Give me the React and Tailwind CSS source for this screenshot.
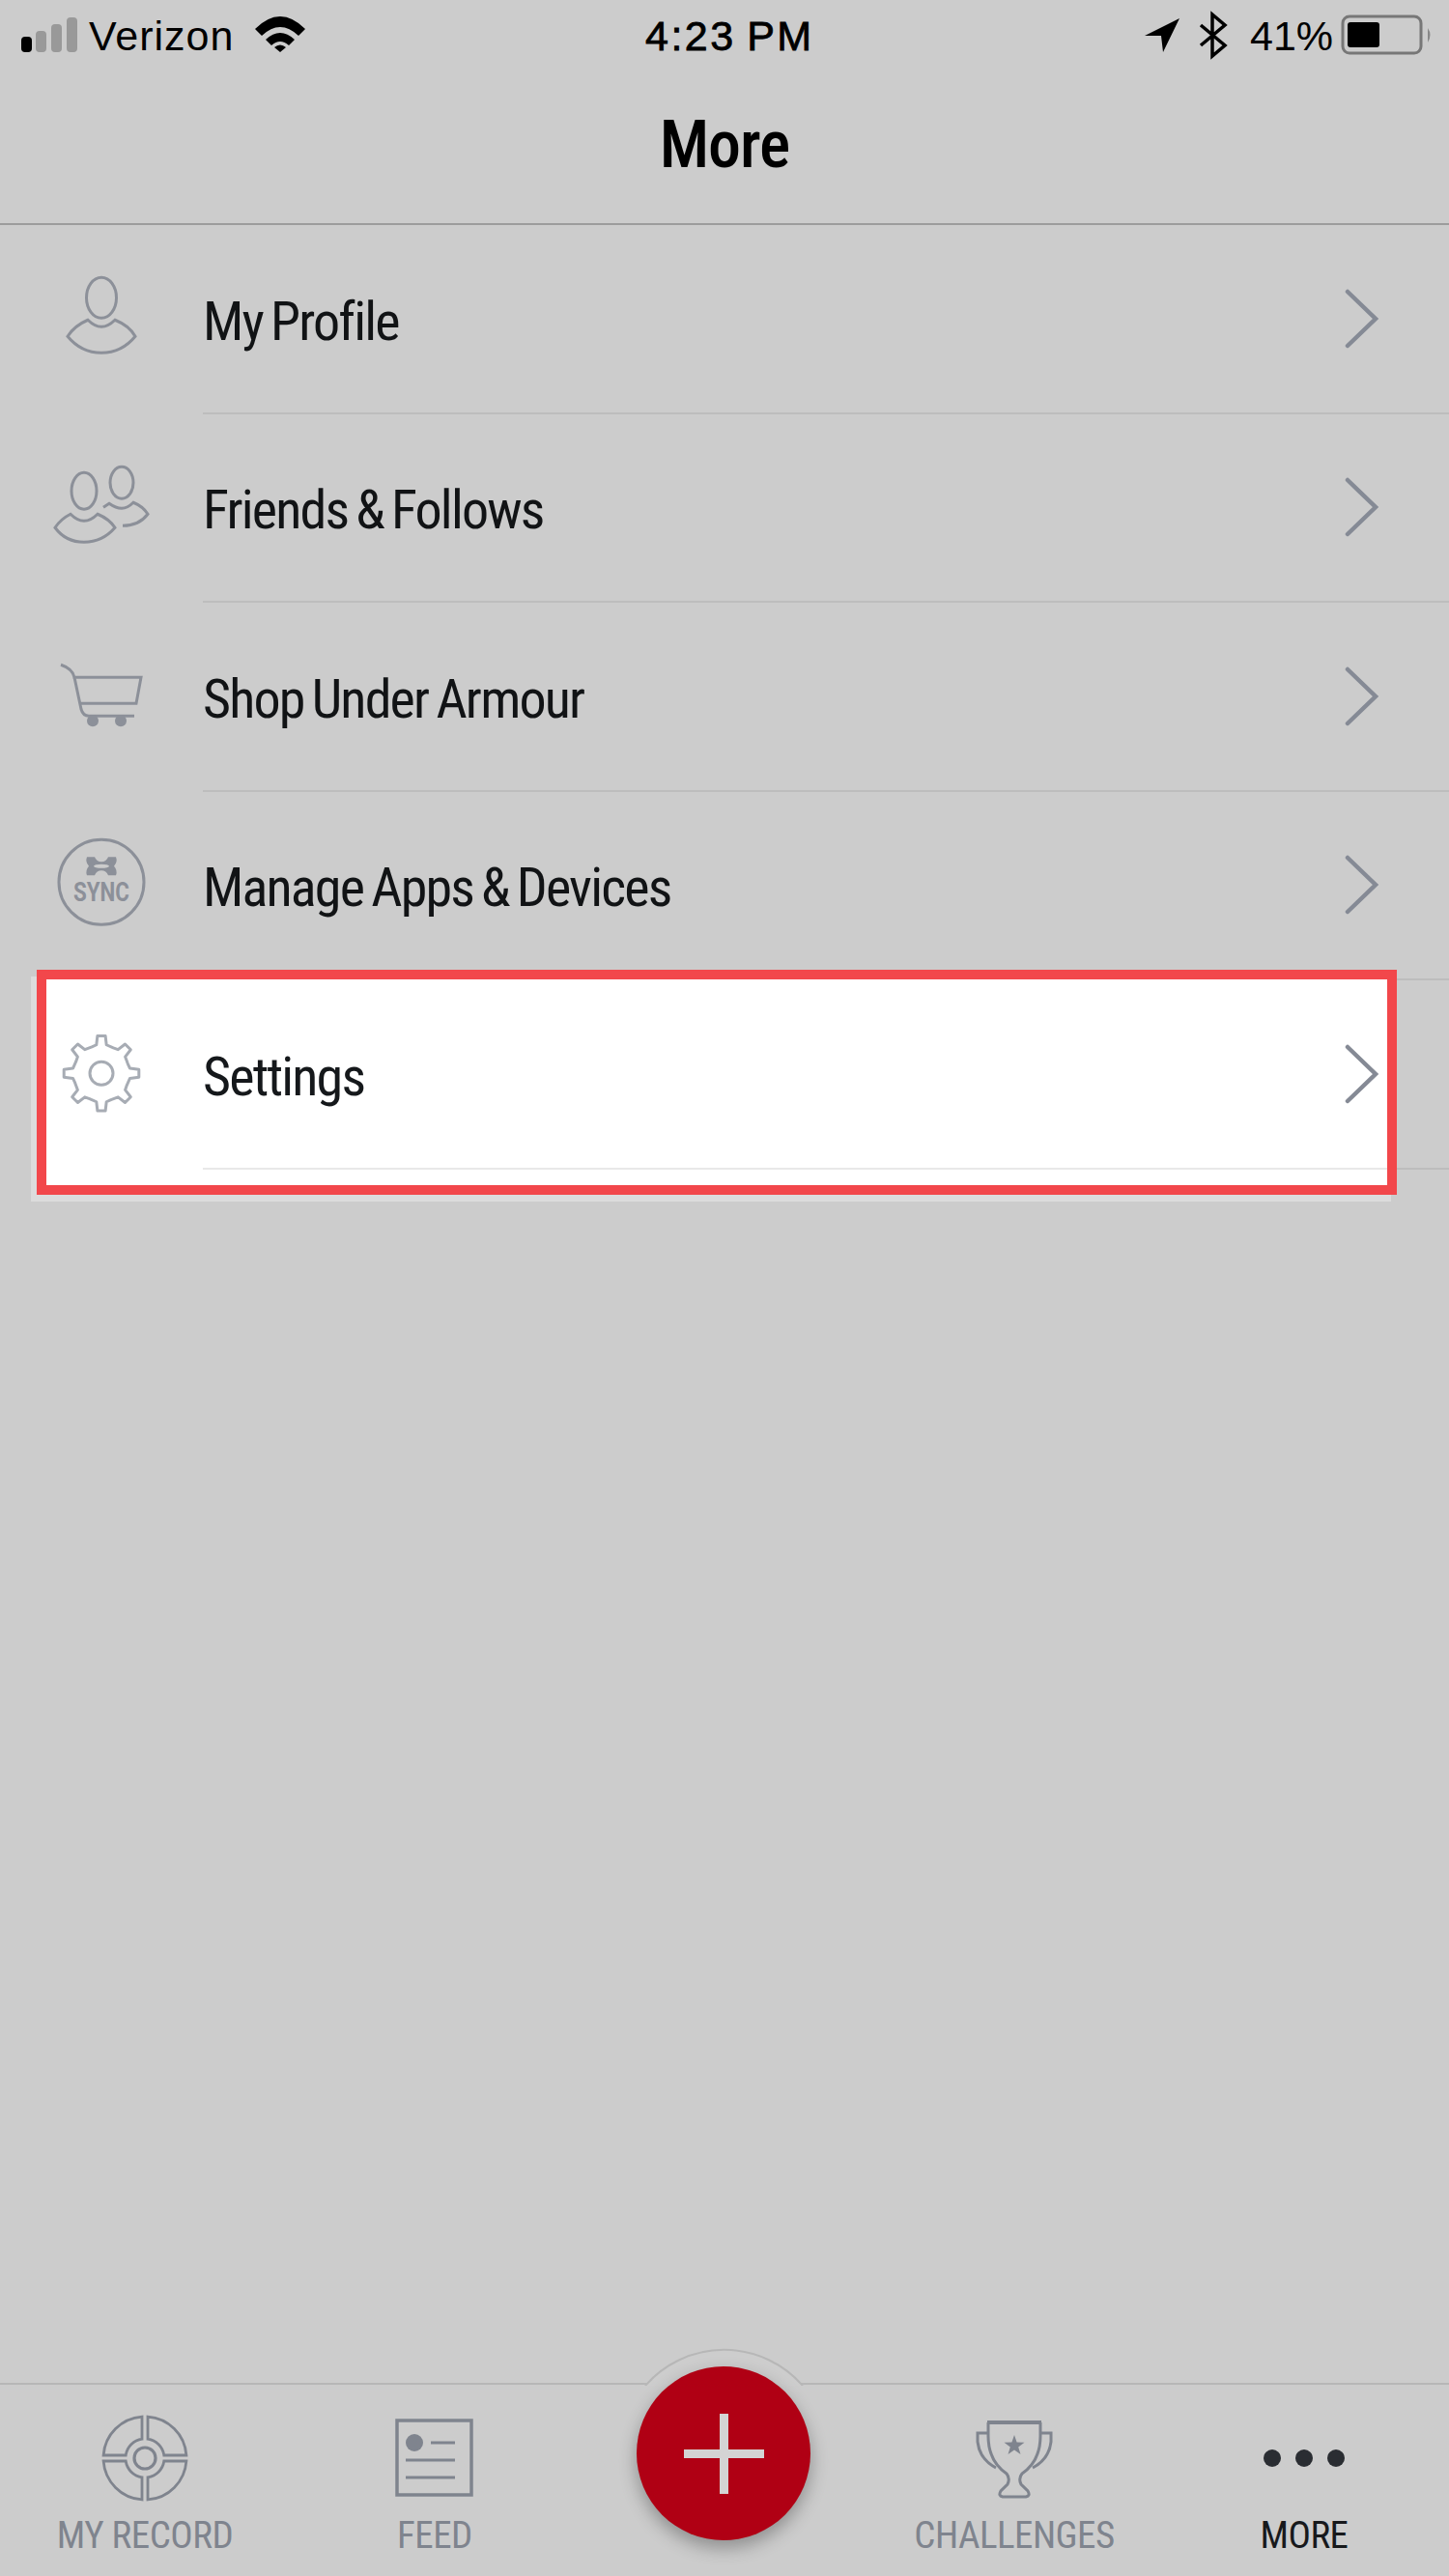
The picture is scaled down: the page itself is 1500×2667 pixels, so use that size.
const narrow = "font-['Roboto',sans-serif] [font-stretch:75%]"
const rowText = "pt-[6px] text-[56px] leading-none tracking-[-1.8px] [word-spacing:-3px]"

const gearPoints = () => {
  const pts = []
  for (let i = 0; i < 8; i++) {
    const a = -90 + i * 45
    const corners = [
      [-20, 29],
      [-10, 30],
      [-6, 39],
      [6, 39],
      [10, 30],
    ]
    corners.forEach(([d, r]) => {
      const t = ((a + d) * Math.PI) / 180
      pts.push(`${(105 + r * Math.cos(t)).toFixed(1)},${(96 + r * Math.sin(t)).toFixed(1)}`)
    })
  }
  return pts.join(" ")
}

const ProfileIcon = () => (
  <svg viewBox="0 0 210 195" className="w-[210px] h-full shrink-0" fill="none" stroke="#8c9099" strokeWidth="3">
    <ellipse cx="105" cy="75" rx="15.5" ry="21" />
    <path d="M91 98 Q98 105 105 105 Q112 105 119 98 Q134 104 140 115 Q126 132 105 132 Q84 132 70 115 Q77 104 91 98Z" />
  </svg>
)

const FriendsIcon = () => (
  <svg viewBox="0 0 210 195" className="w-[210px] h-full shrink-0" fill="none" stroke="#8c9099" strokeWidth="3">
    <ellipse cx="87" cy="79" rx="13" ry="19" />
    <path d="M73 103 Q80 110 87 110 Q94 110 101 103 Q113 108 119 117 Q106 132 87 132 Q68 132 57 117 Q63 108 73 103Z" />
    <ellipse cx="126" cy="70.5" rx="12" ry="16.5" />
    <path d="M107 96 L113 92 Q120 97 126 97 Q132 97 138 91 Q148 95 153 103 Q144 115 127 115" />
  </svg>
)

const CartIcon = () => (
  <svg viewBox="0 0 210 195" className="w-[210px] h-full shrink-0" fill="none" stroke="#8c9099" strokeWidth="3">
    <path d="M63 64 Q75 68 77 77 H146 L141 104 H82" />
    <path d="M77 77 L84 110 Q86 117 92 117 H139" />
    <circle cx="96" cy="122" r="6" fill="#8c9099" stroke="none" />
    <circle cx="125" cy="122" r="6" fill="#8c9099" stroke="none" />
  </svg>
)

const SyncIcon = () => (
  <svg viewBox="0 0 210 195" className="w-[210px] h-full shrink-0">
    <circle cx="105" cy="93" r="44" fill="none" stroke="#8c9099" strokeWidth="3" />
    <path
      fill="#8c9099"
      fillRule="evenodd"
      d="M90 67 L98 67 Q100 72 105 72 Q110 72 112 67 L120 67 Q122 72 118 76.5 Q122 81 120 86 L112 86 Q110 81 105 81 Q100 81 98 86 L90 86 Q88 81 92 76.5 Q88 72 90 67Z M97 76.5 A8 2 0 0 0 113 76.5 A8 2 0 0 0 97 76.5Z"
    />
    <text x="105" y="113" textAnchor="middle" fill="#8c9099" fontSize="28" fontWeight="700" textLength="58" lengthAdjust="spacingAndGlyphs" fontFamily="Roboto, sans-serif">
      SYNC
    </text>
  </svg>
)

const GearIcon = () => (
  <svg viewBox="0 0 210 195" className="w-[210px] h-full shrink-0" fill="none" stroke="#a7acb4" strokeWidth="3">
    <polygon points={gearPoints()} strokeLinejoin="round" />
    <circle cx="105" cy="96" r="12" />
  </svg>
)

const Chevron = () => (
  <svg viewBox="0 0 36 62" className="w-[36px] h-[62px] shrink-0" fill="none" stroke="#858a95" strokeWidth="4.5" strokeLinecap="round">
    <path d="M3 3 L32 31 L3 59" />
  </svg>
)

const rows = [
  { label: "My Profile", Icon: ProfileIcon },
  { label: "Friends & Follows", Icon: FriendsIcon },
  { label: "Shop Under Armour", Icon: CartIcon },
  { label: "Manage Apps & Devices", Icon: SyncIcon },
]

const Row = ({ label, Icon }) => (
  <div className="flex h-[195.5px]">
    <Icon />
    <div className="flex-1 flex items-center justify-between pr-[72px] border-b-2 border-[#bdbdbd]">
      <p className={`${narrow} ${rowText} text-[#111315]`}>{label}</p>
      <Chevron />
    </div>
  </div>
)

const SettingsRow = () => (
  <div className="relative flex h-[195.5px]">
    <div className="absolute left-[32px] top-[-4px] w-[1408px] h-[233px] bg-[#dcdcdc]" />
    <div className="absolute left-[38px] top-[-11px] w-[1408px] h-[233px] bg-white border-[10px] border-[#f2474b]" />
    <div className="absolute left-[1446px] right-0 bottom-0 h-[2px] bg-[#bdbdbd]" />
    <div className="relative flex w-[1436px]">
      <GearIcon />
      <div className="flex-1 flex items-center justify-between pr-[8px] border-b-2 border-[#e8e8e8]">
        <p className={`${narrow} ${rowText} text-[#15181b]`}>Settings</p>
        <Chevron />
      </div>
    </div>
  </div>
)

const StatusBar = () => (
  <div className="relative flex items-center justify-between h-[72px] font-['Liberation_Sans',Arial,sans-serif] text-black">
    <div className="flex items-center">
      <svg viewBox="0 0 320 72" className="w-[320px] h-[72px]">
        <rect x="22" y="38" width="11" height="16" rx="4" fill="#000" />
        <rect x="37" y="32" width="11" height="22" rx="4" fill="#999" />
        <rect x="53" y="25" width="11" height="29" rx="4" fill="#999" />
        <rect x="69" y="18" width="11" height="36" rx="4" fill="#999" />
        <path d="M264 30 Q290 4 316 30 L309 37 Q290 19 271 37Z" />
        <path d="M275 41 Q290 27 305 41 L299 47 Q290 39 281 47Z" />
        <path d="M284 49 Q290 44 296 49 L290 54Z" />
      </svg>
      <span className="absolute left-[92px] top-[13px] text-[43px] leading-[48px] tracking-[1px]">Verizon</span>
    </div>
    <span className="absolute left-[668px] top-[13px] text-[43px] leading-[48px] tracking-[2.5px] [word-spacing:-3px] [-webkit-text-stroke:0.8px_black]">
      4:23 PM
    </span>
    <div className="flex items-center">
      <svg viewBox="1185 0 315 72" className="w-[315px] h-[72px]">
        <path d="M1185 37 L1221 19 L1204 54 L1202 37Z" />
        <path d="M1243 26 L1268 47 L1255 58 V15 L1268 26 L1243 47" fill="none" stroke="#000" strokeWidth="3.5" />
        <rect x="1390" y="17" width="81" height="38" rx="7" fill="none" stroke="#777" strokeWidth="3" />
        <rect x="1395" y="23" width="33" height="26" rx="3" fill="#000" />
        <path d="M1478 29 Q1483 36 1478 44Z" fill="#888" />
      </svg>
    </div>
    <span className="absolute left-[1294px] top-[13px] text-[43px] leading-[48px]">41%</span>
  </div>
)

const Header = () => (
  <div className="h-[161px] border-b-2 border-[#9c9c9c]">
    <h1 className={`${narrow} text-center text-[68px] leading-[76px] pt-[40px] font-medium tracking-[-1px] text-black`}>More</h1>
  </div>
)

const RecordIcon = () => (
  <svg viewBox="-45 -45 90 90" className="w-[90px] h-[90px]" fill="none" stroke="#7f848e" strokeWidth="2.8">
    {[0, 90, 180, 270].map((r) => (
      <path key={r} transform={`rotate(${r})`} d="M3 -42.9 A43 43 0 0 1 42.9 -3 L19.8 -3 A20 20 0 0 0 3 -19.8Z" />
    ))}
    <circle r="11" strokeWidth="3.2" />
  </svg>
)

const FeedIcon = () => (
  <svg viewBox="0 0 90 90" className="w-[90px] h-[90px]" fill="none" stroke="#7f848e" strokeWidth="3.5">
    <rect x="6" y="6" width="77" height="77" />
    <circle cx="24" cy="29" r="9" fill="#7f848e" stroke="none" />
    <path d="M41 29 H66 M15 47 H66 M15 65 H66" strokeWidth="3" />
  </svg>
)

const TrophyIcon = () => (
  <svg viewBox="0 0 90 90" className="w-[90px] h-[90px]" fill="none" stroke="#7f848e" strokeWidth="3">
    <path d="M17 8 H73" strokeWidth="4" />
    <path d="M18 8 V22 Q18 48 37 61 Q41 66 38 72 L31 79 Q28 84 33 85 H57 Q62 84 59 79 L52 72 Q49 66 53 61 Q72 48 72 22 V8" />
    <path d="M18 19 H7 V28 Q9 46 26 55 M72 19 H83 V28 Q81 46 64 55" />
    <polygon
      fill="#7f848e"
      stroke="none"
      points="45,21 47.6,28.5 55.5,28.7 49.2,33.4 51.5,41 45,36.5 38.5,41 40.8,33.4 34.5,28.7 42.4,28.5"
    />
  </svg>
)

const DotsIcon = () => (
  <svg viewBox="0 0 90 90" className="w-[90px] h-[90px]" fill="#2a2d32">
    <circle cx="12" cy="45" r="9" />
    <circle cx="45" cy="45" r="9" />
    <circle cx="78" cy="45" r="9" />
  </svg>
)

const Tab = ({ label, Icon, active }) => (
  <div className="flex flex-col items-center pt-[31px]">
    <Icon />
    <p className={`${narrow} mt-[11px] text-[39px] leading-[48px] tracking-[-0.5px] ${active ? "text-[#17191c]" : "text-[#7f848e]"}`}>{label}</p>
  </div>
)

const TabBar = () => (
  <div className="relative h-[200px] border-t-2 border-[#b7b7b7] grid grid-cols-5">
    <Tab label="MY RECORD" Icon={RecordIcon} />
    <Tab label="FEED" Icon={FeedIcon} />
    <div />
    <Tab label="CHALLENGES" Icon={TrophyIcon} />
    <Tab label="MORE" Icon={DotsIcon} active />
    <svg viewBox="0 0 180 40" className="absolute left-[659px] top-[-39px] w-[180px] h-[40px]">
      <path d="M9 40 A108 108 0 0 1 172 40" fill="#cdcdcd" stroke="#b7b7b7" strokeWidth="2" />
    </svg>
    <div className="absolute left-[659px] top-[-19px] w-[180px] h-[180px] rounded-full bg-[#b00014] shadow-[0_8px_18px_rgba(0,0,0,0.3)] flex items-center justify-center">
      <div className="relative w-[83px] h-[83px]">
        <div className="absolute left-[37px] top-0 w-[9px] h-[83px] bg-[#d4d4d4]" />
        <div className="absolute left-0 top-[37px] w-[83px] h-[9px] bg-[#d4d4d4]" />
      </div>
    </div>
  </div>
)

const App = () => {
  return (
    <div className="flex flex-col w-[1500px] h-[2667px] bg-[#cccccc] overflow-hidden">
      <StatusBar />
      <Header />
      <div className="flex-1">
        {rows.map((row) => (
          <Row key={row.label} {...row} />
        ))}
        <SettingsRow />
      </div>
      <TabBar />
    </div>
  )
}

export default App
